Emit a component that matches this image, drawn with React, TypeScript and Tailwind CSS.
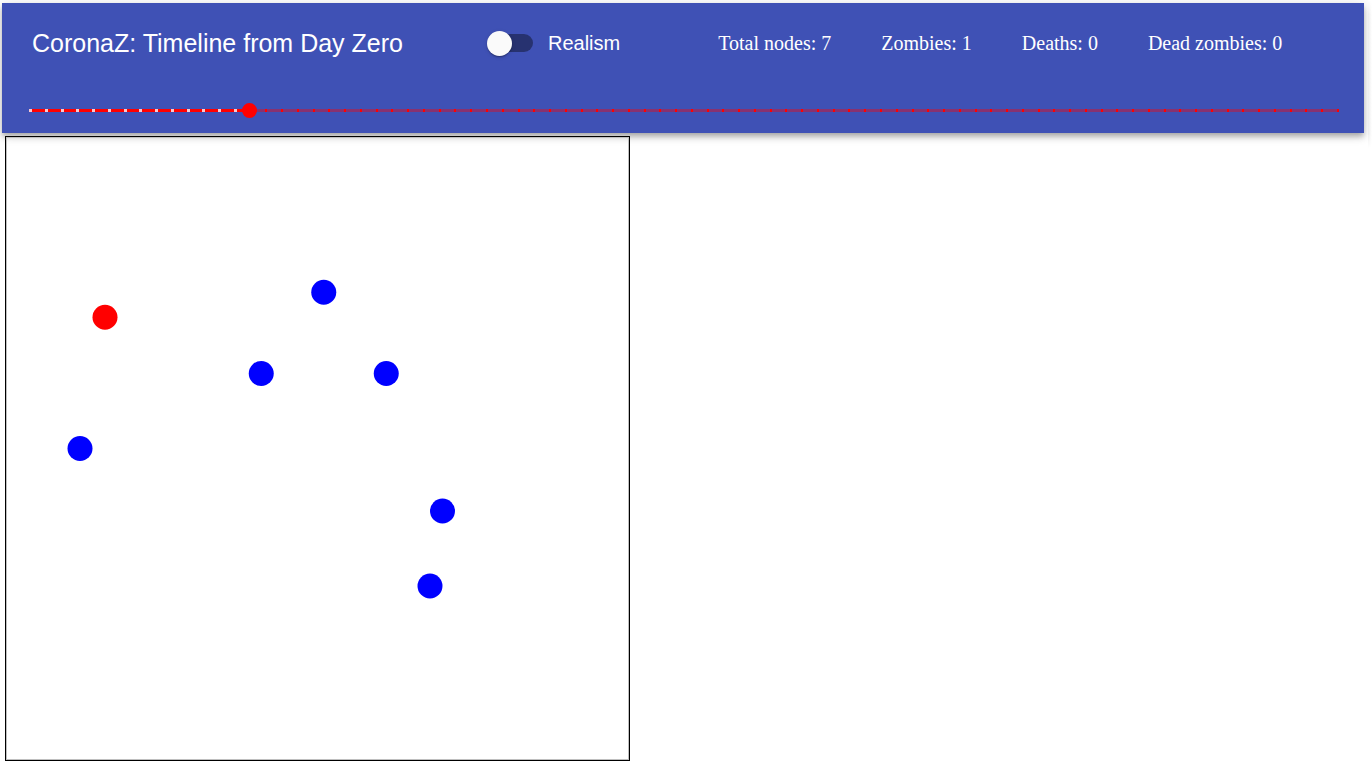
import { useState } from "react";

const LAST_DAY = 83;

const people = [
  { x: 80, y: 145, zombie: true },
  { x: 255, y: 125, zombie: false },
  { x: 205, y: 190, zombie: false },
  { x: 305, y: 190, zombie: false },
  { x: 60, y: 250, zombie: false },
  { x: 350, y: 300, zombie: false },
  { x: 340, y: 360, zombie: false },
];

const stats = [
  { label: "Total nodes", value: 7 },
  { label: "Zombies", value: 1 },
  { label: "Deaths", value: 0 },
  { label: "Dead zombies", value: 0 },
];

function RealismSwitch() {
  const [on, setOn] = useState(false);
  return (
    <label className="flex cursor-pointer items-center gap-[15px]">
      <span className="relative flex h-[25px] w-[46px] items-center">
        <input
          type="checkbox"
          checked={on}
          onChange={(e) => setOn(e.target.checked)}
          className="peer absolute inset-0 z-10 m-0 cursor-pointer opacity-0"
        />
        <span className="ml-[3px] h-[18px] flex-1 rounded-full bg-black/38 peer-checked:bg-red-500/50" />
        <span className="absolute left-0 size-[25px] rounded-full bg-[#fafafa] shadow-[0_2px_2px_-1px_rgba(0,0,0,0.2),0_1px_1px_0_rgba(0,0,0,0.14),0_1px_4px_0_rgba(0,0,0,0.12)] transition-transform peer-checked:translate-x-5" />
      </span>
      <span className="text-[20px] leading-[30px]">Realism</span>
    </label>
  );
}

function Timeline() {
  const [day, setDay] = useState(13.94);
  const marks = Array.from({ length: LAST_DAY + 1 }, (_, i) => i);
  return (
    <div className="relative flex h-[15px] items-center">
      <div className="relative h-[3px] flex-1 bg-[#ff0000]/38">
        <div
          className="h-full bg-[#ff0000]"
          style={{ width: `${(day / LAST_DAY) * 100}%` }}
        />
        {marks.map((i) => (
          <span
            key={i}
            className={
              i <= day
                ? "absolute top-0 -ml-px h-[3px] w-[3px] bg-[#f9c9d0]"
                : "absolute top-0 -ml-px h-[3px] w-[2px] bg-[#ff0000]"
            }
            style={{ left: `${(i / LAST_DAY) * 100}%` }}
          />
        ))}
      </div>
      <input
        type="range"
        aria-label="Day"
        min={0}
        max={LAST_DAY}
        step="any"
        value={day}
        onChange={(e) => setDay(Number(e.target.value))}
        className="absolute inset-y-0 -left-2 -right-2 m-0 h-[15px] cursor-pointer appearance-none bg-transparent [&::-webkit-slider-thumb]:size-[15px] [&::-webkit-slider-thumb]:appearance-none [&::-webkit-slider-thumb]:rounded-full [&::-webkit-slider-thumb]:bg-[#ff0000]"
      />
    </div>
  );
}

export default function App() {
  return (
    <div className="relative overflow-x-hidden bg-white pt-[3px] pb-3 pl-[2px] font-['Liberation_Sans',Arial,sans-serif]">
      <header className="mr-2 h-[130px] bg-[#3f51b5] text-white shadow-[0_3px_5px_-1px_rgba(0,0,0,0.2),0_5px_6px_0_rgba(0,0,0,0.14),0_1px_13px_0_rgba(0,0,0,0.12)]">
        <div className="flex h-20 items-center px-[30px]">
          <h1 className="mr-[84px] text-[25px] leading-10 whitespace-nowrap">
            CoronaZ: Timeline from Day Zero
          </h1>
          <RealismSwitch />
          <dl className="ml-[98px] flex gap-[50px] font-['Liberation_Serif','Times_New_Roman',serif] text-[20px] leading-[30px] whitespace-nowrap">
            {stats.map((s) => (
              <div key={s.label} className="flex gap-[5px]">
                <dt>{s.label}:</dt>
                <dd>{s.value}</dd>
              </div>
            ))}
          </dl>
        </div>
        <div className="pt-5 pr-[26px] pl-7">
          <Timeline />
        </div>
      </header>
      <div className="absolute top-0 right-0 h-[148px] w-1 bg-white">
        <div className="h-full bg-linear-to-r from-[#ececec] to-white mask-y-from-90%" />
      </div>
      <main className="mt-[3px] ml-[3px]">
        <div className="w-[625px] border border-black">
          <svg
            viewBox="1.6 1.6 496.8 496.8"
            role="img"
            aria-label="Map of people and zombies"
            className="block aspect-square w-full border border-[#bfbfbf]"
          >
            {people.map((p) => (
              <circle
                key={`${p.x}-${p.y}`}
                cx={p.x}
                cy={p.y}
                r={10}
                fill={p.zombie ? "#ff0000" : "#0000ff"}
              />
            ))}
          </svg>
        </div>
      </main>
    </div>
  );
}
